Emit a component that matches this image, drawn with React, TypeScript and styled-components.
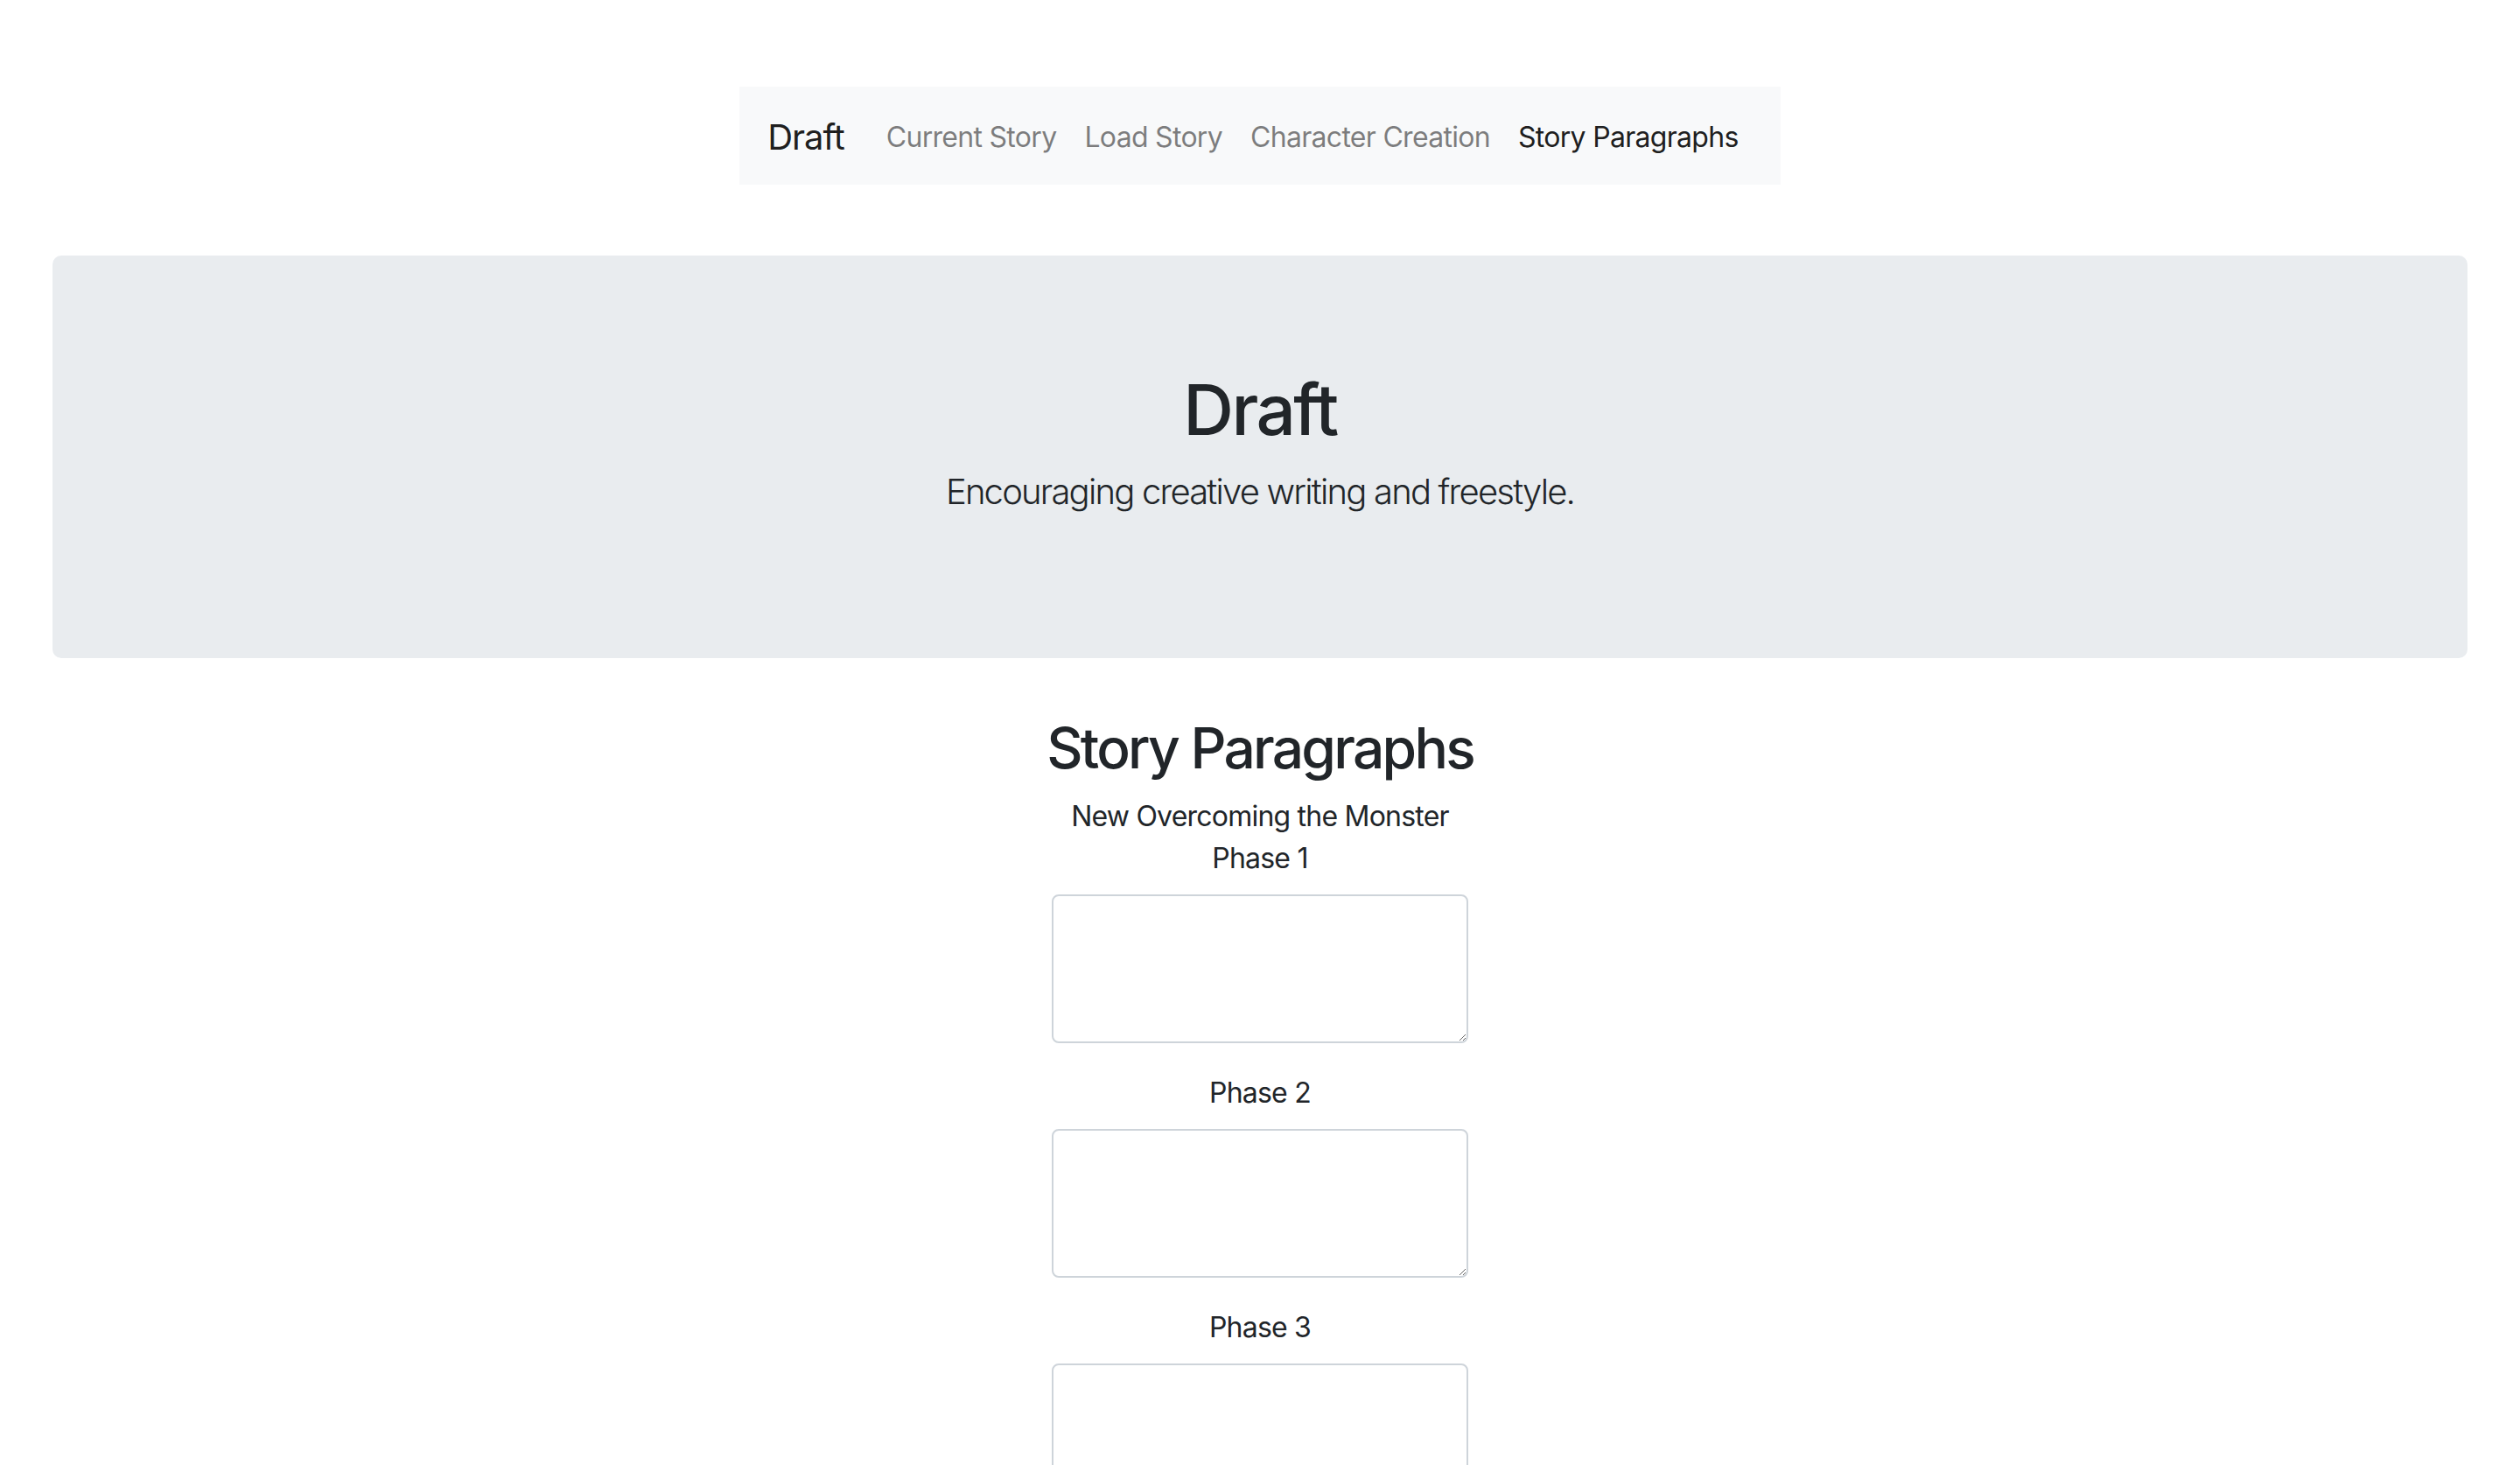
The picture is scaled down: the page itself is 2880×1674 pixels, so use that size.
import React from "react"
import styled, { createGlobalStyle } from "styled-components"

const navItems = [
  { label: "Current Story", active: false },
  { label: "Load Story", active: false },
  { label: "Character Creation", active: false },
  { label: "Story Paragraphs", active: true },
]

const phases = ["Phase 1", "Phase 2", "Phase 3"]

export default function App() {
  return (
    <>
      <GlobalStyle />
      <Page>
        <NavWrapper>
          <Navbar>
            <Brand href="#">Draft</Brand>
            <NavList>
              {navItems.map((item) => (
                <NavLink key={item.label} href="#" active={item.active}>
                  {item.label}
                </NavLink>
              ))}
            </NavList>
          </Navbar>
        </NavWrapper>

        <Jumbotron>
          <HeroTitle>Draft</HeroTitle>
          <Lead>Encouraging creative writing and freestyle.</Lead>
        </Jumbotron>

        <Section>
          <SectionTitle>Story Paragraphs</SectionTitle>
          <StoryName>New Overcoming the Monster</StoryName>
          {phases.map((phase) => (
            <PhaseBlock key={phase}>
              <PhaseLabel>{phase}</PhaseLabel>
              <TextArea />
            </PhaseBlock>
          ))}
        </Section>
      </Page>
    </>
  )
}

const GlobalStyle = createGlobalStyle`
  html, body {
    margin: 0;
    padding: 0;
    background: #ffffff;
  }
  body {
    font-family: Inter, "Liberation Sans", sans-serif;
    color: #212529;
  }
  * {
    box-sizing: border-box;
  }
`

const Page = styled.div`
  padding: 99px 60px 0;
`

const NavWrapper = styled.div`
  display: flex;
  justify-content: center;
`

const Navbar = styled.nav`
  display: flex;
  align-items: center;
  height: 112px;
  padding: 18px 32px 14px;
  background-color: #f8f9fa;
`

const Brand = styled.a`
  font-size: 40px;
  line-height: 60px;
  letter-spacing: -1.1px;
  color: rgba(0, 0, 0, 0.9);
  text-decoration: none;
  margin-right: 32px;
`

const NavList = styled.div`
  display: flex;
`

const NavLink = styled.a<{ active?: boolean }>`
  font-size: 32px;
  line-height: 48px;
  letter-spacing: -0.7px;
  padding: 16px;
  text-decoration: none;
  color: ${(props) => (props.active ? "rgba(0, 0, 0, 0.9)" : "rgba(0, 0, 0, 0.5)")};
`

const Jumbotron = styled.div`
  margin-top: 81px;
  padding: 128px 64px;
  background-color: #e9ecef;
  border-radius: 10px;
  text-align: center;
`

const HeroTitle = styled.h1`
  margin: 0 0 16px;
  font-size: 80px;
  font-weight: 500;
  line-height: 96px;
  letter-spacing: -2.6px;
`

const Lead = styled.p`
  margin: 0 0 32px;
  font-size: 40px;
  font-weight: 300;
  line-height: 60px;
  letter-spacing: -1.8px;
`

const Section = styled.div`
  margin-top: 64px;
  display: flex;
  flex-direction: column;
  align-items: center;
  text-align: center;
`

const SectionTitle = styled.h2`
  margin: 0 0 16px;
  font-size: 64px;
  font-weight: 500;
  line-height: 77px;
  letter-spacing: -2.75px;
`

const StoryName = styled.div`
  font-size: 32px;
  line-height: 48px;
  letter-spacing: -0.78px;
`

const PhaseBlock = styled.div`
  display: flex;
  flex-direction: column;
  align-items: center;
`

const PhaseLabel = styled.div`
  font-size: 32px;
  line-height: 48px;
  letter-spacing: -0.8px;
  margin-bottom: 17px;
`

const TextArea = styled.textarea`
  width: 476px;
  height: 170px;
  margin-bottom: 33px;
  border: 2px solid #ced4da;
  border-radius: 8px;
  background: #ffffff;
  font-family: inherit;
  font-size: 32px;
  padding: 12px 24px;
  outline: none;
`
